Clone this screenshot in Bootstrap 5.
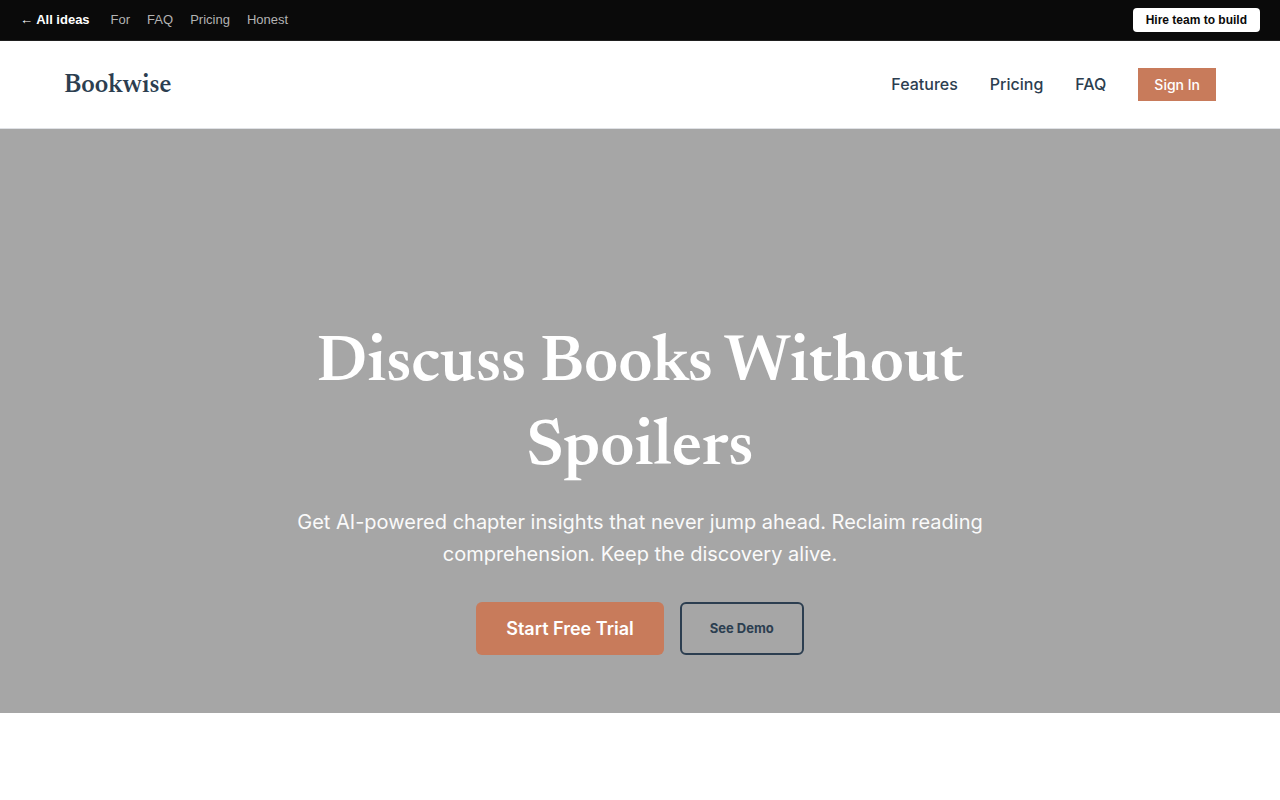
<!DOCTYPE html>
<html lang="en">
<head>
<meta charset="utf-8">
<meta name="viewport" content="width=device-width, initial-scale=1">
<title>Bookwise</title>
<link href="https://cdn.jsdelivr.net/npm/bootstrap@5.3.0/dist/css/bootstrap.min.css" rel="stylesheet">
<script src="https://cdn.jsdelivr.net/npm/bootstrap@5.3.0/dist/js/bootstrap.bundle.min.js" defer></script>
<style>
:root { --ink: #2c3e50; --clay: #c87b5b; }
body { font-family: Inter, sans-serif; color: var(--ink); background: #fff; }
.idea-bar { background: #0a0a0a; border-bottom: 1px solid #1f1f1f; padding: 8px 20px; font: 13px/24px "Liberation Sans", Arial, sans-serif; }
.idea-links { gap: 17px; }
.idea-bar a { color: #b3b3b3; }
.idea-bar .back-link { color: #fff; margin-right: 4px; }
.idea-bar .hire-btn { background: #fff; color: #0a0a0a; font: bold 12px/16px "Liberation Sans", Arial, sans-serif; padding: 4px 13px; border: 0; border-radius: 4px; }
.site-nav { padding: 27px 64px; border-bottom: 1px solid #dfe1e5; }
.site-nav .brand { font: 600 26px/29px Newsreader, "Liberation Serif", serif; color: var(--ink); padding-top: 4px; }
.menu-links { gap: 32px; }
.site-nav .menu-link { color: var(--ink); font-weight: 500; font-size: 16px; line-height: 33px; }
.signin-btn { background: var(--clay); color: #fff; border: 0; border-radius: 0; font-size: 14px; font-weight: 500; line-height: 17px; padding: 8px 16px; }
.hero { background: #a6a6a6; padding: 193px 24px 58px; }
.hero h1 { font: 600 66px/84px Newsreader, "Liberation Serif", serif; color: #fff; max-width: 800px; margin: 0 auto 16px; }
.hero p { font-size: 20px; line-height: 32px; color: #fafafa; max-width: 700px; margin: 0 auto 32px; }
.trial-btn, .demo-btn { border-radius: 6px; }
.trial-btn { background: var(--clay); color: #fff; border: 0; font-weight: 600; font-size: 18px; line-height: 21px; padding: 16px 30px; }
.demo-btn { color: var(--ink); border: 2px solid var(--ink); font-weight: 700; font-size: 13px; line-height: 17px; padding: 16px 28px; }
</style>
</head>
<body>
<nav class="idea-bar d-flex align-items-center justify-content-between" aria-label="Ideas">
  <div class="idea-links d-flex">
    <a href="#" class="back-link fw-bold text-decoration-none">← All ideas</a>
    <a href="#for" class="text-decoration-none">For</a>
    <a href="#faq" class="text-decoration-none">FAQ</a>
    <a href="#pricing" class="text-decoration-none">Pricing</a>
    <a href="#honest" class="text-decoration-none">Honest</a>
  </div>
  <button type="button" class="hire-btn">Hire team to build</button>
</nav>
<header class="site-nav d-flex align-items-center justify-content-between">
  <a href="#" class="brand text-decoration-none">Bookwise</a>
  <nav class="menu-links d-flex align-items-center" aria-label="Main">
    <a href="#features" class="menu-link text-decoration-none">Features</a>
    <a href="#pricing" class="menu-link text-decoration-none">Pricing</a>
    <a href="#faq" class="menu-link text-decoration-none">FAQ</a>
    <button type="button" class="btn signin-btn">Sign In</button>
  </nav>
</header>
<main>
  <section class="hero text-center">
    <h1>Discuss Books Without Spoilers</h1>
    <p>Get AI-powered chapter insights that never jump ahead. Reclaim reading comprehension. Keep the discovery alive.</p>
    <div class="d-flex justify-content-center gap-3">
      <button type="button" class="btn trial-btn">Start Free Trial</button>
      <button type="button" class="btn demo-btn">See Demo</button>
    </div>
  </section>
</main>
</body>
</html>
